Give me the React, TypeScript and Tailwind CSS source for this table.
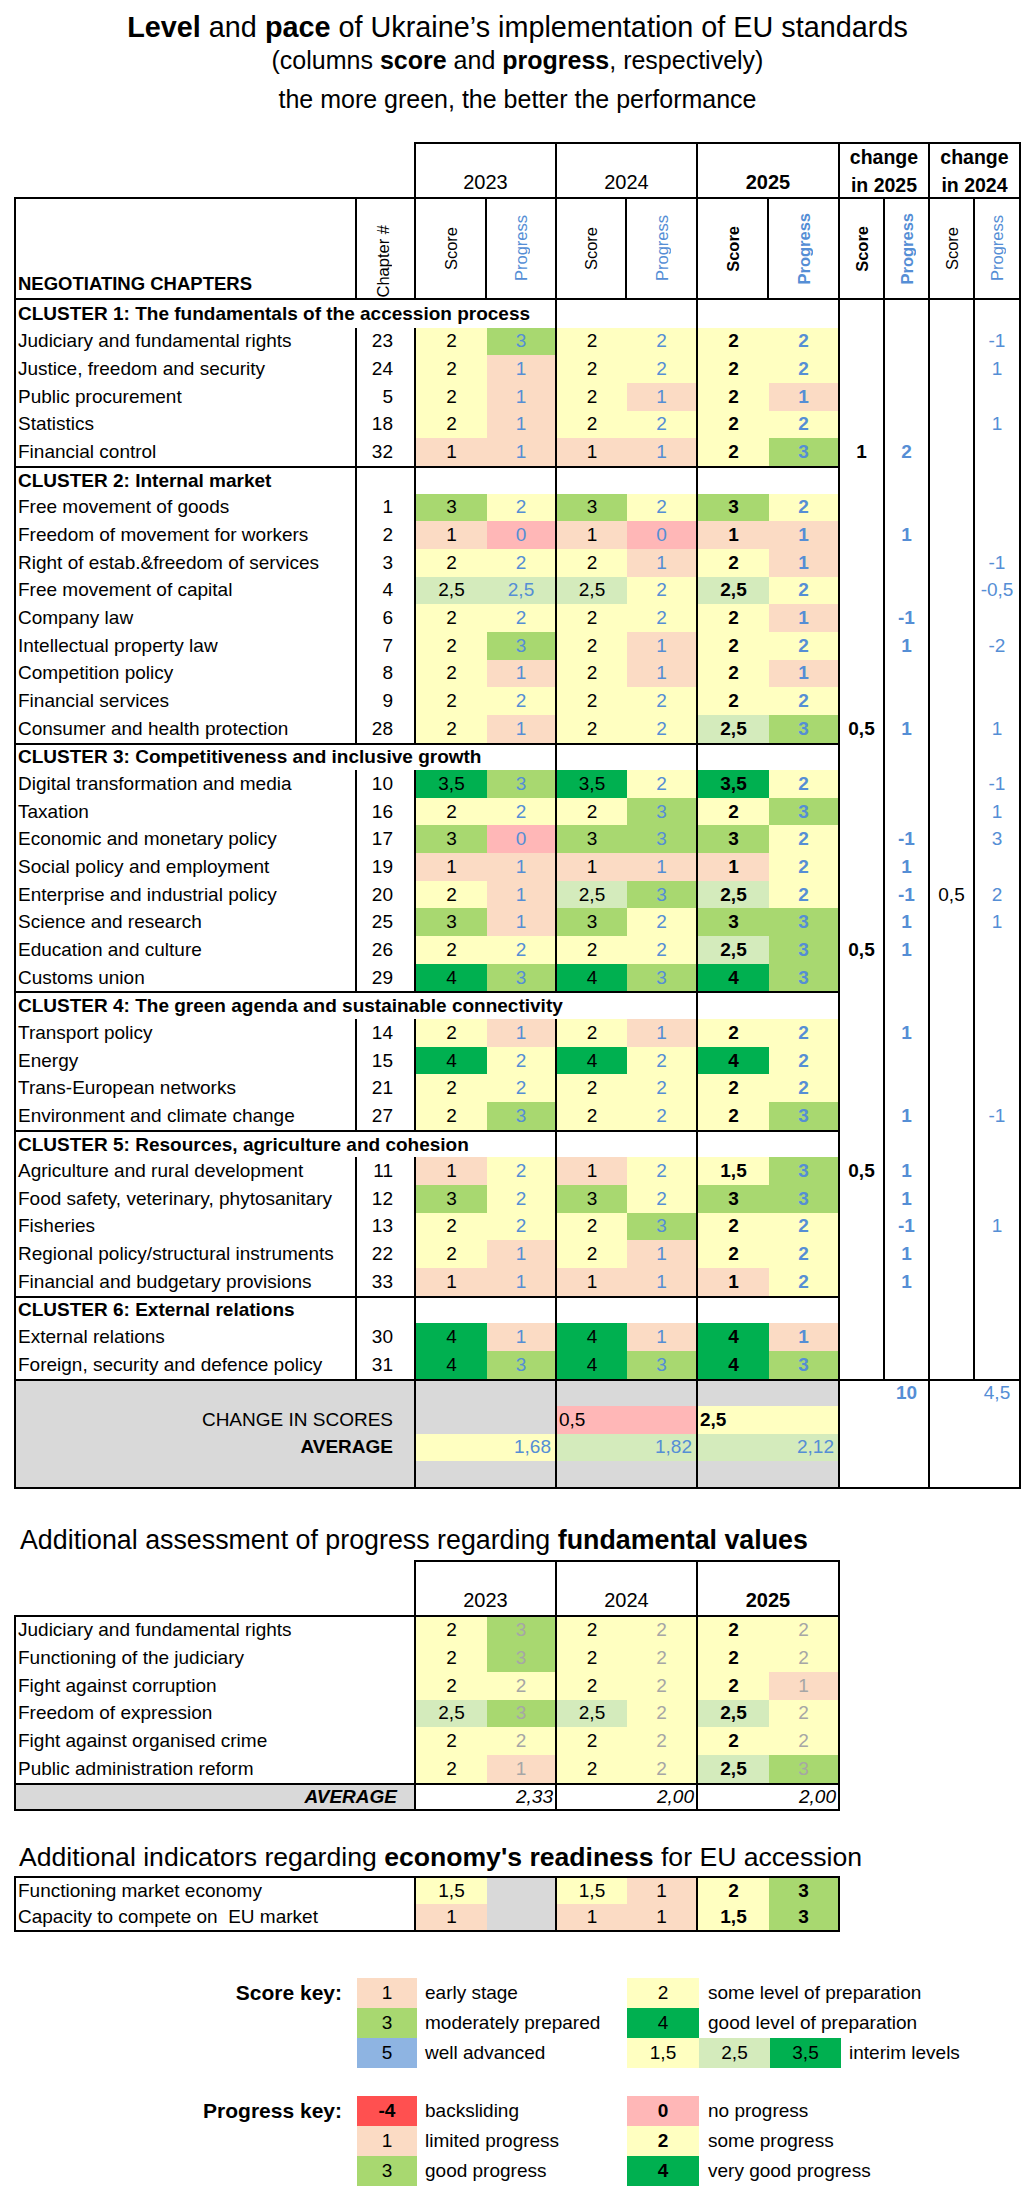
import clsx from 'clsx';

// Colour keys used by the spreadsheet cells
const BG: Record<string, string> = {
  O: 'bg-[#FBDBC4]',
  Y: 'bg-[#FFFFC1]',
  G: 'bg-[#A8D870]',
  D: 'bg-[#00B050]',
  L: 'bg-[#D4EBBC]',
  P: 'bg-[#FFB7B7]',
  R: 'bg-[#FF5050]',
  B: 'bg-[#8EB4E2]',
  X: 'bg-[#D9D9D9]',
  W: 'bg-white',
};

const BLUE = 'text-[#558ED5]';

type Row = [string, string, string, string, string, string, string];

const clusters: { title: string; span: 1 | 4 | 6; rows: Row[] }[] = [
  {
    title: 'CLUSTER 1: The fundamentals of the accession process',
    span: 4,
    rows: [
      ['Judiciary and fundamental rights', '23', '2Y 3G 2Y 2Y 2Y 2Y', '', '', '', '-1'],
      ['Justice, freedom and security', '24', '2Y 1O 2Y 2Y 2Y 2Y', '', '', '', '1'],
      ['Public procurement', '5', '2Y 1O 2Y 1O 2Y 1O', '', '', '', ''],
      ['Statistics', '18', '2Y 1O 2Y 2Y 2Y 2Y', '', '', '', '1'],
      ['Financial control', '32', '1O 1O 1O 1O 2Y 3G', '1', '2', '', ''],
    ],
  },
  {
    title: 'CLUSTER 2: Internal market',
    span: 1,
    rows: [
      ['Free movement of goods', '1', '3G 2Y 3G 2Y 3G 2Y', '', '', '', ''],
      ['Freedom of movement for workers', '2', '1O 0P 1O 0P 1O 1O', '', '1', '', ''],
      ['Right of estab.&freedom of services', '3', '2Y 2Y 2Y 1O 2Y 1O', '', '', '', '-1'],
      ['Free movement of capital', '4', '2,5L 2,5L 2,5L 2Y 2,5L 2Y', '', '', '', '-0,5'],
      ['Company law', '6', '2Y 2Y 2Y 2Y 2Y 1O', '', '-1', '', ''],
      ['Intellectual property law', '7', '2Y 3G 2Y 1O 2Y 2Y', '', '1', '', '-2'],
      ['Competition policy', '8', '2Y 1O 2Y 1O 2Y 1O', '', '', '', ''],
      ['Financial services', '9', '2Y 2Y 2Y 2Y 2Y 2Y', '', '', '', ''],
      ['Consumer and health protection', '28', '2Y 1O 2Y 2Y 2,5L 3G', '0,5', '1', '', '1'],
    ],
  },
  {
    title: 'CLUSTER 3: Competitiveness and inclusive growth',
    span: 4,
    rows: [
      ['Digital transformation and media', '10', '3,5D 3G 3,5D 2Y 3,5D 2Y', '', '', '', '-1'],
      ['Taxation', '16', '2Y 2Y 2Y 3G 2Y 3G', '', '', '', '1'],
      ['Economic and monetary policy', '17', '3G 0P 3G 3G 3G 2Y', '', '-1', '', '3'],
      ['Social policy and employment', '19', '1O 1O 1O 1O 1O 2Y', '', '1', '', ''],
      ['Enterprise and industrial policy', '20', '2Y 1O 2,5L 3G 2,5L 2Y', '', '-1', '0,5', '2'],
      ['Science and research', '25', '3G 1O 3G 2Y 3G 3G', '', '1', '', '1'],
      ['Education and culture', '26', '2Y 2Y 2Y 2Y 2,5L 3G', '0,5', '1', '', ''],
      ['Customs union', '29', '4D 3G 4D 3G 4D 3G', '', '', '', ''],
    ],
  },
  {
    title: 'CLUSTER 4: The green agenda and sustainable connectivity',
    span: 6,
    rows: [
      ['Transport policy', '14', '2Y 1O 2Y 1O 2Y 2Y', '', '1', '', ''],
      ['Energy', '15', '4D 2Y 4D 2Y 4D 2Y', '', '', '', ''],
      ['Trans-European networks', '21', '2Y 2Y 2Y 2Y 2Y 2Y', '', '', '', ''],
      ['Environment and climate change', '27', '2Y 3G 2Y 2Y 2Y 3G', '', '1', '', '-1'],
    ],
  },
  {
    title: 'CLUSTER 5: Resources, agriculture and cohesion',
    span: 4,
    rows: [
      ['Agriculture and rural development', '11', '1O 2Y 1O 2Y 1,5Y 3G', '0,5', '1', '', ''],
      ['Food safety, veterinary, phytosanitary', '12', '3G 2Y 3G 2Y 3G 3G', '', '1', '', ''],
      ['Fisheries', '13', '2Y 2Y 2Y 3G 2Y 2Y', '', '-1', '', '1'],
      ['Regional policy/structural instruments', '22', '2Y 1O 2Y 1O 2Y 2Y', '', '1', '', ''],
      ['Financial and budgetary provisions', '33', '1O 1O 1O 1O 1O 2Y', '', '1', '', ''],
    ],
  },
  {
    title: 'CLUSTER 6: External relations',
    span: 1,
    rows: [
      ['External relations', '30', '4D 1O 4D 1O 4D 1O', '', '', '', ''],
      ['Foreign, security and defence policy', '31', '4D 3G 4D 3G 4D 3G', '', '', '', ''],
    ],
  },
];

const fundamentals: [string, string][] = [
  ['Judiciary and fundamental rights', '2Y 3G 2Y 2Y 2Y 2Y'],
  ['Functioning of the judiciary', '2Y 3G 2Y 2Y 2Y 2Y'],
  ['Fight against corruption', '2Y 2Y 2Y 2Y 2Y 1O'],
  ['Freedom of expression', '2,5L 3G 2,5L 2Y 2,5L 2Y'],
  ['Fight against organised crime', '2Y 2Y 2Y 2Y 2Y 2Y'],
  ['Public administration reform', '2Y 1O 2Y 2Y 2,5L 3G'],
];

const parse = (c: string) => ({ v: c.slice(0, -1), c: c.slice(-1) });

const SPAN: Record<number, string> = { 1: 'col-span-1', 4: 'col-span-4', 6: 'col-span-6' };
const RIGHT_LINE = [2, 4, 6, 8, 9, 10, 11, 12];

function Vert({ children, className }: { children: string; className?: string }) {
  return (
    <span className={clsx('rotate-180 text-[16.5px] leading-[20px] [writing-mode:vertical-rl]', className)}>
      {children}
    </span>
  );
}

function MainTable() {
  const sub = ['Score', 'Progress', 'Score', 'Progress', 'Score', 'Progress', 'Score', 'Progress', 'Score', 'Progress'];
  return (
    <div className="ml-[14px] mt-[27px] grid w-[1007px] grid-cols-[343px_59px_71px_70px_70px_71px_71px_71px_45px_45px_45px_46px] grid-rows-[57px_101px_repeat(39,27.667px)_repeat(4,27.5px)] text-[19px] leading-[22px]">
      {/* year header */}
      <div className="col-span-2 border-r-2 border-b-2 border-black" />
      {['2023', '2024', '2025'].map((y) => (
        <div
          key={y}
          className={clsx(
            'col-span-2 flex items-end justify-center border-t-2 border-r-2 border-b-2 border-black pb-[3px] text-[20px] leading-[24px]',
            y === '2025' && 'font-bold'
          )}
        >
          {y}
        </div>
      ))}
      {['in 2025', 'in 2024'].map((y) => (
        <div
          key={y}
          className="col-span-2 flex flex-col items-center justify-center border-t-2 border-r-2 border-b-2 border-black text-[19.5px] font-bold leading-[28px]"
        >
          <span>change</span>
          <span>{y}</span>
        </div>
      ))}

      {/* sub header */}
      <div className="flex items-end border-l-2 border-r-2 border-b-2 border-black pb-[3px] pl-[2px] text-[18.5px] font-bold">
        NEGOTIATING CHAPTERS
      </div>
      <div className="flex items-end justify-center border-r-2 border-b-2 border-black pb-[1px] pr-[6px]">
        <Vert>Chapter #</Vert>
      </div>
      {sub.map((s, i) => (
        <div key={i} className="flex items-center justify-center border-r-2 border-b-2 border-black">
          <Vert className={clsx(s === 'Progress' && BLUE, i >= 4 && i <= 7 && 'font-bold')}>{s}</Vert>
        </div>
      ))}

      {/* body */}
      {clusters.map((cl, ci) => {
        const rest = [];
        for (let i = cl.span + 1; i <= 12; i++) {
          rest.push(
            <div
              key={`r${i}`}
              className={clsx(
                'border-black bg-white',
                i <= 8 && ci > 0 && 'border-t-2',
                RIGHT_LINE.includes(i) && 'border-r-2'
              )}
            />
          );
        }
        return [
          <div
            key={`c${ci}`}
            className={clsx(
              SPAN[cl.span],
              'flex items-center whitespace-nowrap border-l-2 border-r-2 border-black pl-[2px] font-bold',
              ci > 0 && 'border-t-2'
            )}
          >
            {cl.title}
          </div>,
          ...rest,
          ...cl.rows.map((r) => {
            const cells = r[2].split(' ').map(parse);
            return [
              <div key={r[0]} className="flex items-center whitespace-nowrap border-l-2 border-r-2 border-black pl-[2px]">
                {r[0]}
              </div>,
              <div key={r[0] + 'ch'} className="flex items-center justify-end border-r-2 border-black pr-[21px]">
                {r[1]}
              </div>,
              ...cells.map((c, j) => (
                <div
                  key={r[0] + j}
                  className={clsx(
                    'flex items-center justify-center border-black',
                    BG[c.c],
                    j % 2 === 1 && ['border-r-2', BLUE],
                    j >= 4 && 'font-bold'
                  )}
                >
                  {c.v}
                </div>
              )),
              <div key={r[0] + 'a'} className="flex items-center justify-center border-r-2 border-black font-bold">
                {r[3]}
              </div>,
              <div key={r[0] + 'b'} className={clsx('flex items-center justify-center border-r-2 border-black font-bold', BLUE)}>
                {r[4]}
              </div>,
              <div key={r[0] + 'c'} className="flex items-center justify-center border-r-2 border-black">
                {r[5]}
              </div>,
              <div key={r[0] + 'd'} className={clsx('flex items-center justify-center border-r-2 border-black', BLUE)}>
                {r[6]}
              </div>,
            ];
          }),
        ];
      })}

      {/* summary */}
      <div className="col-span-2 border-t-2 border-l-2 border-r-2 border-black bg-[#D9D9D9]" />
      <div className="col-span-2 border-t-2 border-r-2 border-black bg-[#D9D9D9]" />
      <div className="col-span-2 border-t-2 border-r-2 border-black bg-[#D9D9D9]" />
      <div className="col-span-2 border-t-2 border-r-2 border-black bg-[#D9D9D9]" />
      <div className="border-t-2 border-black" />
      <div className={clsx('flex items-center justify-center border-t-2 border-r-2 border-black font-bold', BLUE)}>10</div>
      <div className="border-t-2 border-black" />
      <div className={clsx('flex items-center justify-center border-t-2 border-r-2 border-black', BLUE)}>4,5</div>

      <div className="col-span-2 flex items-center justify-end border-l-2 border-r-2 border-black bg-[#D9D9D9] pr-[21px]">
        CHANGE IN SCORES
      </div>
      <div className="col-span-2 border-r-2 border-black bg-[#D9D9D9]" />
      <div className="col-span-2 flex items-center border-r-2 border-black bg-[#FFB7B7] pl-[2px]">0,5</div>
      <div className="col-span-2 flex items-center border-r-2 border-black bg-[#FFFFC1] pl-[2px] font-bold">2,5</div>
      <div />
      <div className="border-r-2 border-black" />
      <div />
      <div className="border-r-2 border-black" />

      <div className="col-span-2 flex items-center justify-end border-l-2 border-r-2 border-black bg-[#D9D9D9] pr-[21px] font-bold">
        AVERAGE
      </div>
      <div className={clsx('col-span-2 flex items-center justify-end border-r-2 border-black bg-[#FFFFC1] pr-[4px]', BLUE)}>1,68</div>
      <div className={clsx('col-span-2 flex items-center justify-end border-r-2 border-black bg-[#D4EBBC] pr-[4px]', BLUE)}>1,82</div>
      <div className={clsx('col-span-2 flex items-center justify-end border-r-2 border-black bg-[#D4EBBC] pr-[4px]', BLUE)}>2,12</div>
      <div />
      <div className="border-r-2 border-black" />
      <div />
      <div className="border-r-2 border-black" />

      <div className="col-span-2 border-l-2 border-r-2 border-b-2 border-black bg-[#D9D9D9]" />
      <div className="col-span-2 border-r-2 border-b-2 border-black bg-[#D9D9D9]" />
      <div className="col-span-2 border-r-2 border-b-2 border-black bg-[#D9D9D9]" />
      <div className="col-span-2 border-r-2 border-b-2 border-black bg-[#D9D9D9]" />
      <div className="border-b-2 border-black" />
      <div className="border-r-2 border-b-2 border-black" />
      <div className="border-b-2 border-black" />
      <div className="border-r-2 border-b-2 border-black" />
    </div>
  );
}

function FundamentalTable() {
  return (
    <div className="ml-[14px] mt-[4px] grid w-[826px] grid-cols-[402px_71px_70px_70px_71px_71px_71px] grid-rows-[57px_repeat(6,27.667px)_28px] text-[19px] leading-[22px]">
      <div className="border-r-2 border-b-2 border-black" />
      {['2023', '2024', '2025'].map((y) => (
        <div
          key={y}
          className={clsx(
            'col-span-2 flex items-end justify-center border-t-2 border-r-2 border-b-2 border-black pb-[3px] text-[20px] leading-[24px]',
            y === '2025' && 'font-bold'
          )}
        >
          {y}
        </div>
      ))}
      {fundamentals.map(([name, data]) => [
        <div key={name} className="flex items-center whitespace-nowrap border-l-2 border-r-2 border-black pl-[2px]">
          {name}
        </div>,
        ...data
          .split(' ')
          .map(parse)
          .map((c, j) => (
            <div
              key={name + j}
              className={clsx(
                'flex items-center justify-center border-black',
                BG[c.c],
                j % 2 === 1 && 'border-r-2 text-[#A6A6A6]',
                j === 4 && 'font-bold'
              )}
            >
              {c.v}
            </div>
          )),
      ])}
      <div className="flex items-center justify-end border-2 border-black bg-[#D9D9D9] pr-[17px] font-bold italic">AVERAGE</div>
      {['2,33', '2,00', '2,00'].map((v, i) => (
        <div key={i} className="col-span-2 flex items-center justify-end border-t-2 border-r-2 border-b-2 border-black pr-[2px] italic">
          {v}
        </div>
      ))}
    </div>
  );
}

function EconomyTable() {
  const rows: [string, string][] = [
    ['Functioning market economy', '1,5Y X 1,5Y 1O 2Y 3G'],
    ['Capacity to compete on  EU market', '1O X 1O 1O 1,5Y 3G'],
  ];
  return (
    <div className="ml-[14px] mt-[3px] grid w-[826px] grid-cols-[402px_71px_70px_70px_71px_71px_71px] grid-rows-[28px_28px] text-[19px] leading-[22px]">
      {rows.map(([name, data], ri) => [
        <div
          key={name}
          className={clsx(
            'flex items-center whitespace-pre border-l-2 border-r-2 border-black pl-[2px]',
            ri === 0 ? 'border-t-2' : 'border-b-2'
          )}
        >
          {name}
        </div>,
        ...data.split(' ').map((c, j) => {
          const p = c === 'X' ? { v: '', c: 'X' } : parse(c);
          return (
            <div
              key={name + j}
              className={clsx(
                'flex items-center justify-center border-black',
                BG[p.c],
                ri === 0 ? 'border-t-2' : 'border-b-2',
                j % 2 === 1 && 'border-r-2',
                j >= 4 && 'font-bold'
              )}
            >
              {p.v}
            </div>
          );
        }),
      ])}
    </div>
  );
}

function Swatch({ c, v, w, bold }: { c: string; v: string; w: string; bold?: boolean }) {
  return <div className={clsx('flex items-center justify-center', w, BG[c], bold && 'font-bold')}>{v}</div>;
}

function KeyRow({ label, children }: { label?: string; children: React.ReactNode }) {
  return (
    <div className="flex h-[30px] items-stretch">
      <div className="flex w-[357px] items-center justify-end pr-[15px] text-[21px] font-bold">{label}</div>
      {children}
    </div>
  );
}

function Legend() {
  const txt1 = 'flex w-[210px] items-center pl-[8px]';
  const txt2 = 'flex items-center pl-[9px]';
  return (
    <div className="mt-[46px] text-[19px] leading-[22px]">
      <KeyRow label="Score key:">
        <Swatch c="O" v="1" w="w-[60px]" />
        <div className={txt1}>early stage</div>
        <Swatch c="Y" v="2" w="w-[72px]" />
        <div className={txt2}>some level of preparation</div>
      </KeyRow>
      <KeyRow>
        <Swatch c="G" v="3" w="w-[60px]" />
        <div className={txt1}>moderately prepared</div>
        <Swatch c="D" v="4" w="w-[72px]" />
        <div className={txt2}>good level of preparation</div>
      </KeyRow>
      <KeyRow>
        <Swatch c="B" v="5" w="w-[60px]" />
        <div className={txt1}>well advanced</div>
        <Swatch c="Y" v="1,5" w="w-[72px]" />
        <Swatch c="L" v="2,5" w="w-[71px]" />
        <Swatch c="D" v="3,5" w="w-[71px]" />
        <div className="flex items-center pl-[8px]">interim levels</div>
      </KeyRow>

      <div className="mt-[28px]">
        <KeyRow label="Progress key:">
          <Swatch c="R" v="-4" w="w-[60px]" bold />
          <div className={txt1}>backsliding</div>
          <Swatch c="P" v="0" w="w-[72px]" bold />
          <div className={txt2}>no progress</div>
        </KeyRow>
        <KeyRow>
          <Swatch c="O" v="1" w="w-[60px]" />
          <div className={txt1}>limited progress</div>
          <Swatch c="Y" v="2" w="w-[72px]" bold />
          <div className={txt2}>some progress</div>
        </KeyRow>
        <KeyRow>
          <Swatch c="G" v="3" w="w-[60px]" />
          <div className={txt1}>good progress</div>
          <Swatch c="D" v="4" w="w-[72px]" bold />
          <div className={txt2}>very good progress</div>
        </KeyRow>
      </div>
    </div>
  );
}

export default function App() {
  return (
    <div className="min-h-[2197px] w-[1035px] bg-white font-['Liberation_Sans',Arial,sans-serif] text-black">
      <div className="pt-[10px] text-center">
        <div className="text-[28.8px] leading-[34px]">
          <b>Level</b> and <b>pace</b> of Ukraine’s implementation of EU standards
        </div>
        <div className="text-[25px] leading-[32px]">
          (columns <b>score</b> and <b>progress</b>, respectively)
        </div>
        <div className="mt-[7px] text-[25px] leading-[32px]">the more green, the better the performance</div>
      </div>

      <MainTable />

      <div className="pl-[20px] pt-[35px] text-[26.8px] leading-[32px]">
        Additional assessment of progress regarding <b>fundamental values</b>
      </div>
      <FundamentalTable />

      <div className="pl-[19px] pt-[30px] text-[26.6px] leading-[32px]">
        Additional indicators regarding <b>economy's readiness</b> for EU accession
      </div>
      <EconomyTable />

      <Legend />
    </div>
  );
}
